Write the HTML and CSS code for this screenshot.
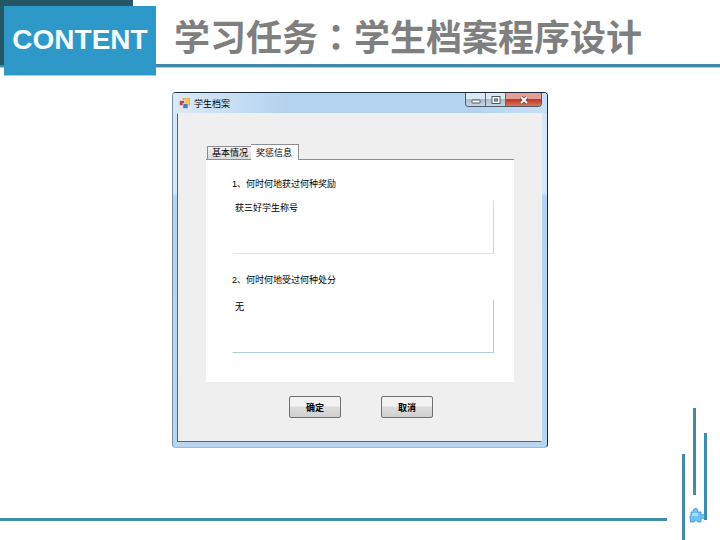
FILE: index.html
```html
<!DOCTYPE html>
<html lang="zh-CN">

<head>
    <meta charset="UTF-8">
    <meta name="viewport" content="width=device-width, initial-scale=1.0">
    <title>学习任务：学生档案程序设计</title>
    <link rel="stylesheet" href="styles.css">
</head>

<body>

    <header class="header">
        <div class="brand-back">
            <div class="brand">CONTENT</div>
        </div>
        <h1 class="title">学习任务<span class="colon" lang="zh-TW">：</span>学生档案程序设计</h1>
    </header>

    <main class="window">
        <div class="titlebar">
            <svg class="app-icon" viewBox="0 0 11 11" aria-hidden="true">
                <rect x="4" y="0" width="7" height="7" fill="#f2c65a" stroke="#b98a3a" stroke-width=".6" />
                <rect x="0.3" y="2.5" width="5" height="5" fill="#b8474c" stroke="#f0e2e8" stroke-width=".6" />
                <rect x="4" y="5.5" width="5" height="5" fill="#5574c0" stroke="#e4ecf8" stroke-width=".6" />
            </svg>
            <span class="caption">学生档案</span>
            <div class="window-controls">
                <button type="button" class="control" aria-label="最小化">
                    <svg width="10" height="8" viewBox="0 0 10 8"><rect x="1" y="4" width="8" height="3" rx=".5" fill="#fff" stroke="#4c5a6a" /></svg>
                </button>
                <button type="button" class="control" aria-label="最大化">
                    <svg width="10" height="8" viewBox="0 0 10 8"><rect x="1" y=".5" width="8" height="7" fill="#fff" stroke="#4c5a6a" /><rect x="3.5" y="3" width="3" height="2" fill="#a9b9c9" stroke="#4c5a6a" /></svg>
                </button>
                <button type="button" class="control control-close" aria-label="关闭">
                    <svg width="10" height="8" viewBox="0 0 10 8"><path d="M2 1l6 6M8 1L2 7" stroke="#6b3a3a" stroke-width="3.4" /><path d="M2 1l6 6M8 1L2 7" stroke="#fff" stroke-width="2" /></svg>
                </button>
            </div>
        </div>

        <form class="client">
            <div class="tabs" role="tablist">
                <button type="button" class="tab" role="tab" aria-selected="false">基本情况</button>
                <button type="button" class="tab tab-active" role="tab" aria-selected="true">奖惩信息</button>
            </div>
            <div class="panel" role="tabpanel">
                <label for="award">1、何时何地获过何种奖励</label>
                <textarea id="award" class="award" name="award">获三好学生称号</textarea>

                <label for="punish">2、何时何地受过何种处分</label>
                <textarea id="punish" class="punish" name="punish">无</textarea>
            </div>
            <div class="actions">
                <button type="button" class="button">确定</button>
                <button type="button" class="button">取消</button>
            </div>
        </form>
    </main>

    <div class="rule"></div>
    <svg class="ornament" width="53" height="132" viewBox="0 0 53 132" aria-hidden="true">
        <g fill="#408ba8">
            <rect x="15" y="46" width="3" height="86" />
            <rect x="26" y="0" width="3" height="87" />
            <rect x="37" y="25" width="3" height="87" />
        </g>
        <path d="M24 104h2.500c-1-2 0-3.500 2-3.500s3 1.500 2 3.500h3.500v3c2-1 3.500-.5 3.500 1.500s-1.500 2.500-3.500 1.500v4h-3.500c0-2-3-2-3 0h-4v-3.500c-1 0-.5-.5-.5-1.500s0-1.500 1-2z" fill="#6cc3f2" stroke="#3b93cf" stroke-width=".8" />
        <path d="M25 105h6v3h-6z" fill="#a4def9" />
    </svg>

</body>

</html>
```
FILE: styles.css
```css
* {
    box-sizing: border-box;
}

body {
    margin: 0;
    min-height: 100vh;
    display: grid;
    grid-template-columns: 1fr auto;
    grid-template-rows: auto 1fr auto;
    background-color: #fff;
    font-family: "Liberation Sans", "Noto Sans CJK SC", sans-serif;
}

/* Header */
.header {
    grid-column: 1 / -1;
    height: 67px;
    display: flex;
    border-bottom: 3px solid #4489a8;
    box-shadow: 0 1px 0 #a9d0dc;
}

.brand-back {
    width: 133px;
    height: 65px;
    padding: 6px 0 0 4px;
    background-color: #245766;
    flex-shrink: 0;
}

.brand {
    width: 152px;
    height: 69px;
    background-color: #2e98c9;
    box-shadow: 0 1px 0 #a9d0dc;
    color: #f4fdff;
    font-size: 28px;
    font-weight: bold;
    line-height: 67px;
    text-align: center;
}

.title {
    margin: 0 0 0 41px;
    color: #7f7f7f;
    font-family: "Noto Sans CJK SC", sans-serif;
    font-size: 36px;
    font-weight: bold;
    line-height: 70px;
    white-space: nowrap;
}

.colon {
    font-family: "Noto Sans CJK TC", sans-serif;
}

/* Dialog window */
.window {
    grid-column: 1 / -1;
    grid-row: 2;
    justify-self: center;
    align-self: start;
    width: 90%;
    max-width: 376px;
    margin: 25px 0;
    padding: 0 5px 5px 4px;
    border: 1px solid #1d2b3a;
    border-left-color: #7590a8;
    border-bottom-color: #9db8d0;
    border-radius: 4px;
    background: linear-gradient(#d4e6f7 0, #d4e6f7 100px, #b5d2ee 104px, #b9d5ef 100%);
    font-size: 9px;
}

.titlebar {
    height: 20px;
    margin: 0 -5px 0 -4px;
    display: flex;
    align-items: center;
    gap: 4px;
    padding-left: 6px;
    border-radius: 3px 3px 0 0;
    background: linear-gradient(90deg, #dceaf7, #b4d3ef 30%, #b4d3f0 80%, #c9e0f5);
}

.app-icon {
    width: 11px;
    height: 11px;
}

.window-controls {
    margin: 0 5px 0 auto;
    align-self: flex-start;
    display: flex;
    border: 1px solid #4f5b68;
    border-top: 0;
    border-radius: 0 0 4px 4px;
    overflow: hidden;
}

.control {
    width: 20px;
    height: 13px;
    padding: 0;
    display: flex;
    align-items: center;
    justify-content: center;
    border: 0;
    border-right: 1px solid #5d6b79;
    background: linear-gradient(#dbe7f2 45%, #a9bccd 50%, #c4d7e8);
}

.control-close {
    width: 35px;
    border-right: 0;
    background: linear-gradient(#e3a096 45%, #bd3a26 50%, #d8755c);
}

.client {
    padding: 29px 27px 23px 28px;
    border: 1px solid #e8f2fb;
    border-left-color: #52677c;
    border-bottom-color: #52677c;
    background-color: #efefef;
}

/* Tabs */
.tabs {
    height: 17px;
    display: flex;
    align-items: flex-end;
    padding-left: 1px;
    border-bottom: 1px solid #8c8e94;
}

.tab {
    height: 13px;
    padding: 0 3px 0 4px;
    border: 1px solid #8c8e94;
    border-width: 1px 0 0 1px;
    background: linear-gradient(#f3f3f3, #dadada);
    color: #000;
    font: inherit;
    line-height: 12px;
}

.tab-active {
    height: 16px;
    margin-bottom: -1px;
    padding: 0 6px 0 5px;
    border-width: 1px 1px 0 0;
    background: #fff;
    line-height: 14px;
}

.panel {
    padding: 17px 20px 29px 26px;
    background-color: #fff;
}

label {
    display: block;
    line-height: 14px;
}

textarea {
    display: block;
    width: 100%;
    height: 54px;
    margin: 9px 0 19px;
    padding: 1px 2px;
    border: 1px solid #fff;
    border-right-color: #c9dbe2;
    border-bottom-color: #e3e3e3;
    border-radius: 1px;
    resize: none;
    outline: 0;
    background: #fff;
    color: #000;
    font: inherit;
    line-height: 12px;
}

.punish {
    margin-top: 12px;
    margin-bottom: 0;
    border-right-color: #b0cbd8;
    border-bottom-color: #b0cbd8;
}

/* Buttons */
.actions {
    display: flex;
    justify-content: center;
    gap: 40px;
    padding: 14px 0 0 2px;
}

.button {
    width: 52px;
    height: 22px;
    padding: 0;
    border: 1px solid #707070;
    border-radius: 2px;
    background: linear-gradient(#f2f2f2 45%, #dddddd 50%, #cfcfcf);
    color: #000;
    font: inherit;
    font-weight: bold;
}

/* Bottom decoration */
.rule {
    grid-column: 1;
    grid-row: 3;
    height: 3px;
    margin-bottom: 19px;
    background-color: #408ba8;
}

.ornament {
    grid-column: 2;
    grid-row: 2 / 4;
    align-self: end;
    display: block;
}
```
